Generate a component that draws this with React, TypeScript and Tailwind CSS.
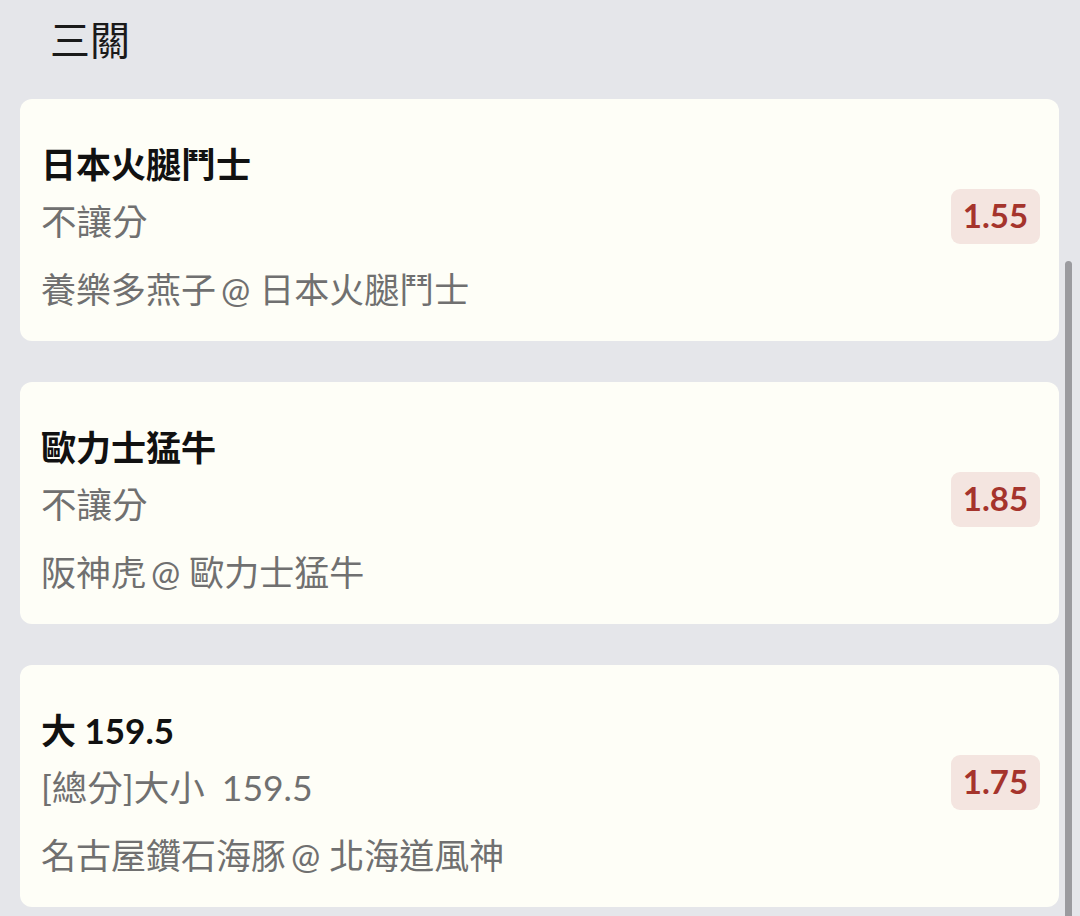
import React from "react";

const FONT = "font-['Lato','Noto_Sans_CJK_TC',sans-serif]";

type Leg = { title: string; market: string; home: string; away: string; odds: string };

const legs: Leg[] = [
  { title: "日本火腿鬥士", market: "不讓分", away: "養樂多燕子", home: "日本火腿鬥士", odds: "1.55" },
  { title: "歐力士猛牛", market: "不讓分", away: "阪神虎", home: "歐力士猛牛", odds: "1.85" },
  { title: "大 159.5", market: "[總分]大小 159.5", away: "名古屋鑽石海豚", home: "北海道風神", odds: "1.75" },
];

function Card({ leg }: { leg: Leg }) {
  return (
    <div className="flex items-center justify-between rounded-[12px] bg-[#fefef7] pl-[21px] pr-[19px] pt-[41px] pb-[28px]">
      <div className="flex flex-col">
        <div className="text-[35px] leading-[48px] font-bold text-[#111111]">{leg.title}</div>
        <div className="mt-[10px] text-[35.5px] leading-[48px] text-[#707070] [word-spacing:8px]">{leg.market}</div>
        <div className="mt-[19px] text-[35px] leading-[48px] text-[#707070]">
          {leg.away}
          <span className="-ml-[4px]"> @ </span>
          {leg.home}
        </div>
      </div>
      <div className="mb-[21px] flex h-[55px] w-[89px] items-center justify-center rounded-[9px] bg-[#f4e5e0] text-[33px] font-bold text-[#a5342c]">
        {leg.odds}
      </div>
    </div>
  );
}

export default function App() {
  return (
    <div className={`relative min-h-screen overflow-hidden bg-[#e5e6ea] ${FONT}`}>
      <div className="pl-[50px] pt-[18px] text-[40px] leading-[44px] text-[#1a1a1a]">三關</div>
      <div className="mt-[37px] flex flex-col gap-[41px] pl-[20px] pr-[21px]">
        {legs.map((l) => (
          <Card key={l.title} leg={l} />
        ))}
      </div>
      <div className="absolute left-[1065px] top-[261px] h-[700px] w-[7px] rounded-full bg-[#9b9b9f]" />
    </div>
  );
}
